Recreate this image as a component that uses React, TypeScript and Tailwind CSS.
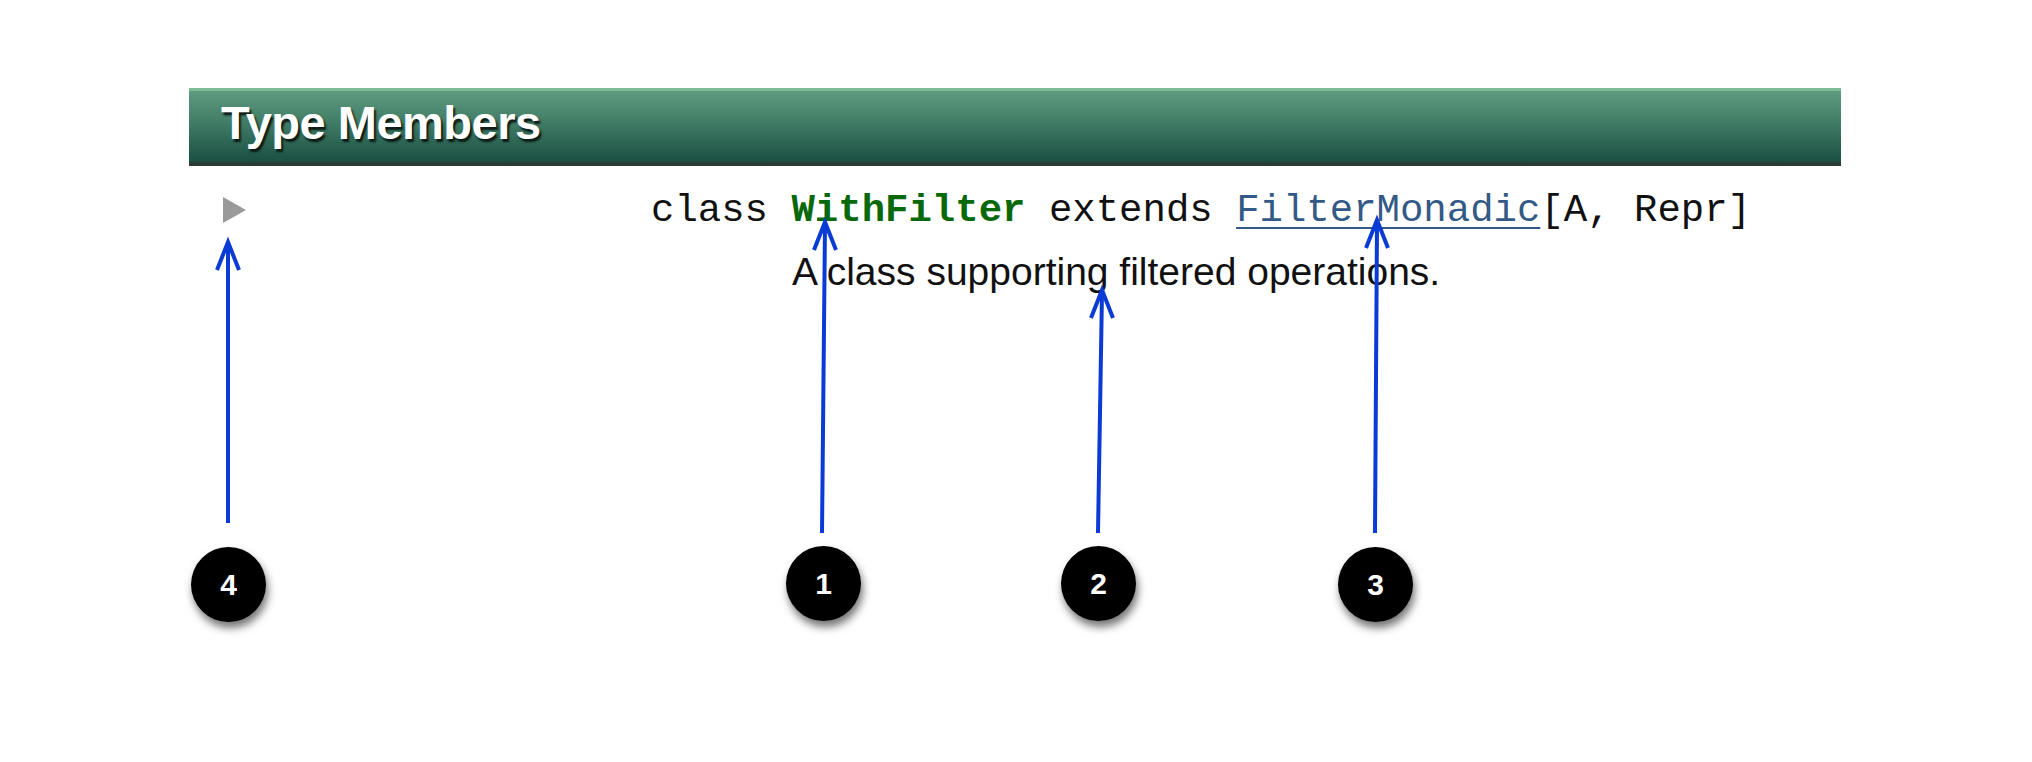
import React from "react";

const callouts = [
  { n: "4", x: 228, y: 584, tip: [228, 242], end: [228, 523] },
  { n: "1", x: 823, y: 583, tip: [825, 222], end: [822, 533] },
  { n: "2", x: 1098, y: 583, tip: [1102, 290], end: [1098, 533] },
  { n: "3", x: 1375, y: 584, tip: [1377, 220], end: [1375, 533] },
];

export default function App() {
  return (
    <div className="relative w-[2032px] h-[762px] bg-white overflow-hidden">
      <div className="pl-[189px] pr-[191px] pt-[88px]">
        {/* Section header */}
        <div className="h-[78px] border-t-[3px] border-b-[4px] border-t-[#7dbd98] border-b-[#2b3b35] bg-gradient-to-b from-[#5f9b7f] via-[#3d7863] to-[#1a4f42] pl-[32px] pt-[8px]">
          <h2 className="font-['Liberation_Sans',Arial,sans-serif] font-bold text-[47px] leading-none tracking-[-0.5px] text-white [text-shadow:2px_3px_2px_#0d1a15]">
            Type Members
          </h2>
        </div>

        {/* Member row */}
        <div className="flex items-start mt-[26px]">
          <div className="ml-[34px] mt-[5px] w-0 h-0 border-y-[13px] border-y-transparent border-l-[23px] border-l-[#9a9a9a]" />
          <div className="ml-[405px]">
            <div className="font-['Liberation_Mono','Courier_New',monospace] text-[39px] leading-none text-[#111] whitespace-pre">
              <span>class </span>
              <span className="font-bold text-[#08690b]">WithFilter</span>
              <span> extends </span>
              <a className="text-[#335a86] underline decoration-[2px] underline-offset-[6px]">FilterMonadic</a>
              <span>[A, Repr]</span>
            </div>
            <p className="mt-[21px] pl-[141px] font-['Liberation_Sans',Arial,sans-serif] text-[39px] leading-none text-[#111]">
              A class supporting filtered operations.
            </p>
          </div>
        </div>
      </div>

      {/* Annotation arrows */}
      <svg
        className="absolute inset-0 pointer-events-none"
        width={2032}
        height={762}
        viewBox="0 0 2032 762"
      >
        {callouts.map((c) => (
          <g key={c.n} stroke="#0a3bd4" strokeWidth={4} fill="none">
            <line x1={c.tip[0]} y1={c.tip[1] + 2} x2={c.end[0]} y2={c.end[1]} />
            <polyline
              points={`${c.tip[0] - 11},${c.tip[1] + 28} ${c.tip[0]},${c.tip[1]} ${c.tip[0] + 11},${c.tip[1] + 28}`}
            />
          </g>
        ))}
      </svg>

      {/* Numbered badges */}
      {callouts.map((c) => (
        <div
          key={c.n}
          className="absolute w-[75px] h-[75px] -ml-[37px] -mt-[37px] rounded-full bg-black shadow-[2px_6px_8px_rgba(0,0,0,0.55)] flex items-center justify-center font-['Liberation_Sans',Arial,sans-serif] font-bold text-[30px] text-white"
          style={{ left: c.x, top: c.y }}
        >
          {c.n}
        </div>
      ))}
    </div>
  );
}
